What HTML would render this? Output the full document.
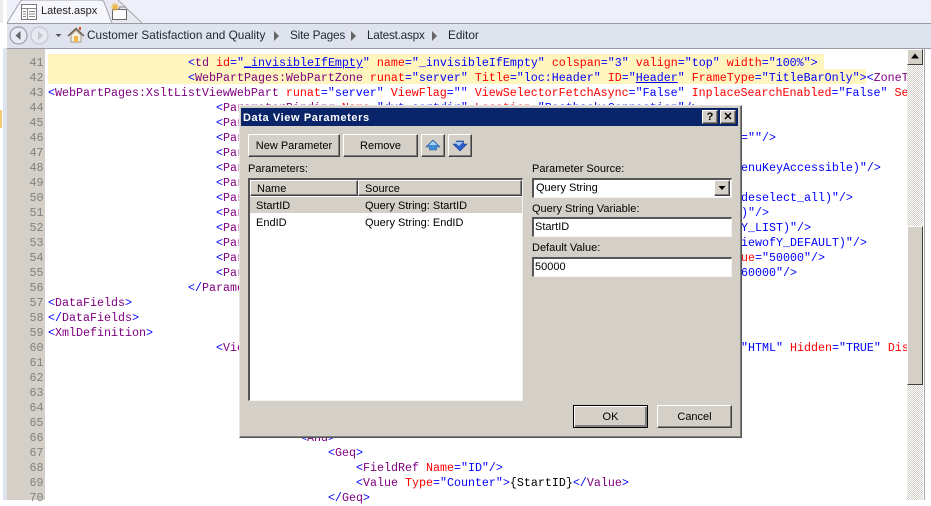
<!DOCTYPE html>
<html><head><meta charset="utf-8"><style>
html,body{margin:0;padding:0}
body{width:931px;height:500px;position:relative;overflow:hidden;background:#fff;font-family:"Liberation Sans",sans-serif;font-size:11px;color:#000}
div{position:absolute;box-sizing:border-box}
.l{font:11.67px/15px "Liberation Mono",monospace;color:#00f;white-space:pre;height:15px;margin-top:2px}
.l i{color:#800080;font-style:normal}.l s{color:#f00;text-decoration:none}.l em{color:#000;font-style:normal}
.n{left:7px;width:36.5px;text-align:right;font:11.67px/15px "Liberation Mono",monospace;color:#808080;height:15px;margin-top:2px}
.hl{background:#fff6bf;height:15px;left:48px}
.btn{background:#d4d0c8;border:1px solid;border-color:#fff #404040 #404040 #fff;box-shadow:inset -1px -1px 0 #808080;text-align:center;line-height:23px;height:23px;white-space:pre}
.lb{white-space:pre;line-height:13px;height:13px;margin-top:1px}
.sunk{border-top:2px solid #555;border-left:2px solid #555;border-right:1px solid #f4f3f0;border-bottom:1px solid #f4f3f0}
.bc{top:28px;line-height:15px;font-size:11.8px;color:#1f2733;white-space:pre}
</style></head><body>

<!-- left edge -->
<div style="left:0;top:0;width:7px;height:500px;background:#fff"></div>
<div style="left:3px;top:48px;width:4px;height:452px;background:#dfe3ee"></div>
<div style="left:0;top:110px;width:2px;height:18px;background:#f5c873"></div>
<div style="left:0;top:0;width:3px;height:23px;background:#ececec"></div>

<!-- tab bar -->
<div style="left:7px;top:0;width:924px;height:23px;background:#eeeff8"></div>
<svg style="position:absolute;left:0;top:0" width="160" height="24">
<path d="M104 0 L118 0 L142 23 L110 23 Z" fill="#e8e9f3" stroke="none"/>
<path d="M118 0 L142 23" stroke="#a8a8b0" fill="none"/>
<path d="M7 23 L20 2 Q21 0 24 0 L100 0 Q103 0 104 2 L112 23 Z" fill="#f6f7fc"/>
<path d="M7 23 L20 2 Q21 0 24 0 L100 0 Q103 0 104 2 L112 23" stroke="#a2a2aa" fill="none"/>
<rect x="21.5" y="4.5" width="15" height="15" fill="#fff" stroke="#777"/>
<path d="M22 8.5H36M27.5 9V19M29 11.5H35M29 14H35M29 16.5H35M23 11.5H26M23 14H26M23 16.5H26" stroke="#8a8a8a" fill="none"/>
<rect x="112.5" y="9.5" width="14" height="10" fill="#fff" stroke="#666"/>
<path d="M112 9 L119 9 L120 7 L126 7" stroke="#888" fill="none"/>
<circle cx="115" cy="7" r="2.5" fill="#f4c552"/>
<path d="M115 2.5V11.5M110.500 7H119.500M112 4L118 10M118 4L112 10" stroke="#eeb23e" stroke-width=".8"/>
</svg>
<div style="left:41px;top:4px;line-height:14px;font-size:11px;color:#222;white-space:pre">Latest.aspx</div>
<div style="left:7px;top:23px;width:924px;height:1px;background:#9a9ca5"></div>

<!-- breadcrumb -->
<div style="left:7px;top:24px;width:924px;height:24px;background:#dfe3ee"></div>
<div style="left:7px;top:48px;width:924px;height:1px;background:#9a9ca5"></div>
<svg style="position:absolute;left:0;top:24px" width="100" height="24">
<circle cx="18.500" cy="11.500" r="8.500" fill="#e8ebf3" stroke="#9a9da4" stroke-width="1.200"/>
<path d="M20.500 7 L15.500 11.500 L20.500 16 Z" fill="#666"/>
<circle cx="39.500" cy="11.500" r="8.500" fill="#e6e9f2" stroke="#c2c5cd" stroke-width="1.100"/>
<path d="M38 7 L43 11.500 L38 16 Z" fill="#c4c7ce"/>
<path d="M55.500 10 H61.500 L58.500 13 Z" fill="#555"/>
<path d="M68 12 L76 4.500 L84 12" fill="none" stroke="#6a5a48" stroke-width="1.500"/>
<path d="M71 11 L76 6.500 L81 11 V18 H71 Z" fill="#f3efe2" stroke="#8a7c68" stroke-width=".7"/>
<rect x="74" y="12" width="4" height="6" fill="#f0b84a"/>
<rect x="79" y="3" width="2" height="3" fill="#d9542b"/>
</svg>
<div class="bc" style="left:87px">Customer Satisfaction and Quality</div>
<div class="bc" style="left:290px;letter-spacing:-.2px">Site Pages</div>
<div class="bc" style="left:367px;letter-spacing:-.25px">Latest.aspx</div>
<div class="bc" style="left:448px">Editor</div>
<svg style="position:absolute;left:270px;top:24px" width="170" height="24" fill="#666">
<path d="M4 7 L9 12 L4 17 Z"/><path d="M81 7 L86 12 L81 17 Z"/><path d="M162 7 L167 12 L162 17 Z"/>
</svg>

<!-- gutter -->
<div style="left:7px;top:49px;width:38px;height:451px;background:#d4d0c8"></div>
<div class="n" style="top:54px">41</div><div class="n" style="top:69px">42</div><div class="n" style="top:84px">43</div><div class="n" style="top:99px">44</div><div class="n" style="top:114px">45</div><div class="n" style="top:129px">46</div><div class="n" style="top:144px">47</div><div class="n" style="top:159px">48</div><div class="n" style="top:174px">49</div><div class="n" style="top:189px">50</div><div class="n" style="top:204px">51</div><div class="n" style="top:219px">52</div><div class="n" style="top:234px">53</div><div class="n" style="top:249px">54</div><div class="n" style="top:264px">55</div><div class="n" style="top:279px">56</div><div class="n" style="top:294px">57</div><div class="n" style="top:309px">58</div><div class="n" style="top:324px">59</div><div class="n" style="top:339px">60</div><div class="n" style="top:354px">61</div><div class="n" style="top:369px">62</div><div class="n" style="top:384px">63</div><div class="n" style="top:399px">64</div><div class="n" style="top:414px">65</div><div class="n" style="top:429px">66</div><div class="n" style="top:444px">67</div><div class="n" style="top:459px">68</div><div class="n" style="top:474px">69</div><div class="n" style="top:489px">70</div>

<!-- highlights -->
<div class="hl" style="top:54px;width:776px"></div>
<div class="hl" style="top:69px;width:818px"></div>

<!-- code -->
<div class="l" style="left:188px;top:54px">&lt;<i>td</i> <s>id</s>="<u>_invisibleIfEmpty</u>" <s>name</s>="_invisibleIfEmpty" <s>colspan</s>="3" <s>valign</s>="top" <s>width</s>="100%"&gt;</div>
<div class="l" style="left:188px;top:69px;width:719px;overflow:hidden">&lt;<i>WebPartPages:WebPartZone</i> <s>runat</s>="server" <s>Title</s>="loc:Header" <s>ID</s>="<u>Header</u>" <s>FrameType</s>="TitleBarOnly"&gt;&lt;<i>ZoneTemplate</i>&gt;</div>
<div class="l" style="left:48px;top:84px;width:859px;overflow:hidden">&lt;<i>WebPartPages:XsltListViewWebPart</i> <s>runat</s>="server" <s>ViewFlag</s>="" <s>ViewSelectorFetchAsync</s>="False" <s>InplaceSearchEnabled</s>="False" <s>ServerRender</s>="False"</div>
<div class="l" style="left:216px;top:99px">&lt;<i>ParameterBinding</i> <s>Name</s>="dvt_sortdir" <s>Location</s>="Postback;Connection"/&gt;</div>
<div class="l" style="left:216px;top:114px">&lt;<i>Par</i></div>
<div class="l" style="left:216px;top:129px">&lt;<i>Par</i></div>
<div class="l" style="left:741px;top:129px">=""/&gt;</div>
<div class="l" style="left:216px;top:144px">&lt;<i>Par</i></div>
<div class="l" style="left:216px;top:159px">&lt;<i>Par</i></div>
<div class="l" style="left:741px;top:159px">enuKeyAccessible)"/&gt;</div>
<div class="l" style="left:216px;top:174px">&lt;<i>Par</i></div>
<div class="l" style="left:216px;top:189px">&lt;<i>Par</i></div>
<div class="l" style="left:741px;top:189px">deselect_all)"/&gt;</div>
<div class="l" style="left:216px;top:204px">&lt;<i>Par</i></div>
<div class="l" style="left:741px;top:204px">)"/&gt;</div>
<div class="l" style="left:216px;top:219px">&lt;<i>Par</i></div>
<div class="l" style="left:741px;top:219px">Y_LIST)"/&gt;</div>
<div class="l" style="left:216px;top:234px">&lt;<i>Par</i></div>
<div class="l" style="left:741px;top:234px">iewofY_DEFAULT)"/&gt;</div>
<div class="l" style="left:216px;top:249px">&lt;<i>Par</i></div>
<div class="l" style="left:741px;top:249px"><s>ue</s>="50000"/&gt;</div>
<div class="l" style="left:216px;top:264px">&lt;<i>Par</i></div>
<div class="l" style="left:741px;top:264px">60000"/&gt;</div>
<div class="l" style="left:188px;top:279px">&lt;/<i>Parameters</i>&gt;</div>
<div class="l" style="left:48px;top:294px">&lt;<i>DataFields</i>&gt;</div>
<div class="l" style="left:48px;top:309px">&lt;/<i>DataFields</i>&gt;</div>
<div class="l" style="left:48px;top:324px">&lt;<i>XmlDefinition</i>&gt;</div>
<div class="l" style="left:216px;top:339px">&lt;<i>View</i></div>
<div class="l" style="left:741px;top:339px;width:166px;overflow:hidden">"HTML" <s>Hidden</s>="TRUE" <s>DisplayName</s></div>
<div class="l" style="left:300px;top:429px">&lt;<i>And</i>&gt;</div>
<div class="l" style="left:328px;top:444px">&lt;<i>Geq</i>&gt;</div>
<div class="l" style="left:356px;top:459px">&lt;<i>FieldRef</i> <s>Name</s>="ID"/&gt;</div>
<div class="l" style="left:356px;top:474px">&lt;<i>Value</i> <s>Type</s>="Counter"&gt;<em>{StartID}</em>&lt;/<i>Value</i>&gt;</div>
<div class="l" style="left:328px;top:489px">&lt;/<i>Geq</i>&gt;</div>

<!-- scrollbar -->
<div style="left:907px;top:49px;width:16px;height:451px;background-color:#e8e6e2;background-image:repeating-conic-gradient(#d4d0c8 0 25%,#fff 0 50%);background-size:2px 2px"></div>
<div style="left:907px;top:49px;width:16px;height:16px;background:#d4d0c8;border:1px solid;border-color:#fff #404040 #404040 #fff"></div>
<svg style="position:absolute;left:907px;top:49px" width="16" height="16"><path d="M8 4.500 L12 9.500 H4 Z" fill="#000"/></svg>
<div style="left:907px;top:226px;width:16px;height:159px;background:#d4d0c8;border:1px solid;border-color:#fff #404040 #404040 #fff"></div>
<div style="left:924px;top:49px;width:1px;height:451px;background:#a8a8a8"></div>

<!-- dialog -->
<div style="left:239px;top:105px;width:503px;height:333px;background:#d4d0c8;border:1px solid;border-color:#e8e6e2 #555 #555 #e8e6e2;box-shadow:inset -1px -1px 0 #808080"></div>
<div style="left:241px;top:108px;width:497px;height:18px;background:#0a246a"></div>
<div style="left:243px;top:111px;font-weight:bold;color:#fff;line-height:14px;font-size:11px;letter-spacing:.6px;white-space:pre">Data View Parameters</div>
<div class="btn" style="left:702px;top:110px;width:16px;height:14px;line-height:12px;font-weight:bold;font-size:11px">?</div>
<div class="btn" style="left:720px;top:110px;width:16px;height:14px;line-height:12px;font-weight:bold;font-size:11px">✕</div>

<div class="btn" style="left:248px;top:134px;width:92px">New Parameter</div>
<div class="btn" style="left:343px;top:134px;width:75px">Remove</div>
<div class="btn" style="left:421px;top:134px;width:24px"></div>
<div class="btn" style="left:448px;top:134px;width:24px"></div>
<svg style="position:absolute;left:421px;top:134px" width="51" height="23">
<path d="M12 6 L19 13 L15.500 13 L15.500 16 L8.500 16 L8.500 13 L5 13 Z" fill="#3f8fd8" stroke="#28509c" stroke-width=".6"/>
<path d="M12 7 L16 11 H8 Z" fill="#a8d0f0"/>
<path d="M39 17 L46 10 L42.500 10 L42.500 7 L35.500 7 L35.500 10 L32 10 Z" fill="#2f5fc8" stroke="#1e3c8c" stroke-width=".6"/>
<path d="M33 8 H42 L38 12 Z" fill="#a8c8f0"/>
</svg>

<div class="lb" style="left:248px;top:162px">Parameters:</div>
<div class="sunk" style="left:248px;top:178px;width:275px;height:223px;background:#fff"></div>
<div class="btn" style="left:250px;top:180px;width:108px;height:16px;line-height:16px;text-align:left;padding-left:6px">Name</div>
<div class="btn" style="left:358px;top:180px;width:164px;height:16px;line-height:16px;text-align:left;padding-left:6px">Source</div>
<div style="left:250px;top:197px;width:272px;height:16px;background:#d4d0c8"></div>
<div class="lb" style="left:256px;top:199px">StartID</div>
<div class="lb" style="left:365px;top:199px">Query String: StartID</div>
<div class="lb" style="left:256px;top:216px">EndID</div>
<div class="lb" style="left:365px;top:216px">Query String: EndID</div>

<div class="lb" style="left:532px;top:162px">Parameter Source:</div>
<div class="sunk" style="left:532px;top:178px;width:200px;height:20px;background:#fff;padding-left:2px;line-height:16px;white-space:pre">Query String</div>
<div class="btn" style="left:714px;top:180px;width:16px;height:16px"></div>
<svg style="position:absolute;left:714px;top:180px" width="16" height="16"><path d="M4.500 6 H11.500 L8 10 Z" fill="#000"/></svg>
<div class="lb" style="left:532px;top:202px">Query String Variable:</div>
<div class="sunk" style="left:532px;top:217px;width:200px;height:20px;background:#fff;padding-left:1px;line-height:16px;white-space:pre">StartID</div>
<div class="lb" style="left:532px;top:241px">Default Value:</div>
<div class="sunk" style="left:532px;top:257px;width:200px;height:20px;background:#fff;padding-left:1px;line-height:16px;white-space:pre">50000</div>

<div class="btn" style="left:573px;top:405px;width:75px;border:1px solid #000;box-shadow:inset 1px 1px 0 #fff,inset -2px -2px 0 #808080">OK</div>
<div class="btn" style="left:657px;top:405px;width:75px">Cancel</div>
</body></html>
